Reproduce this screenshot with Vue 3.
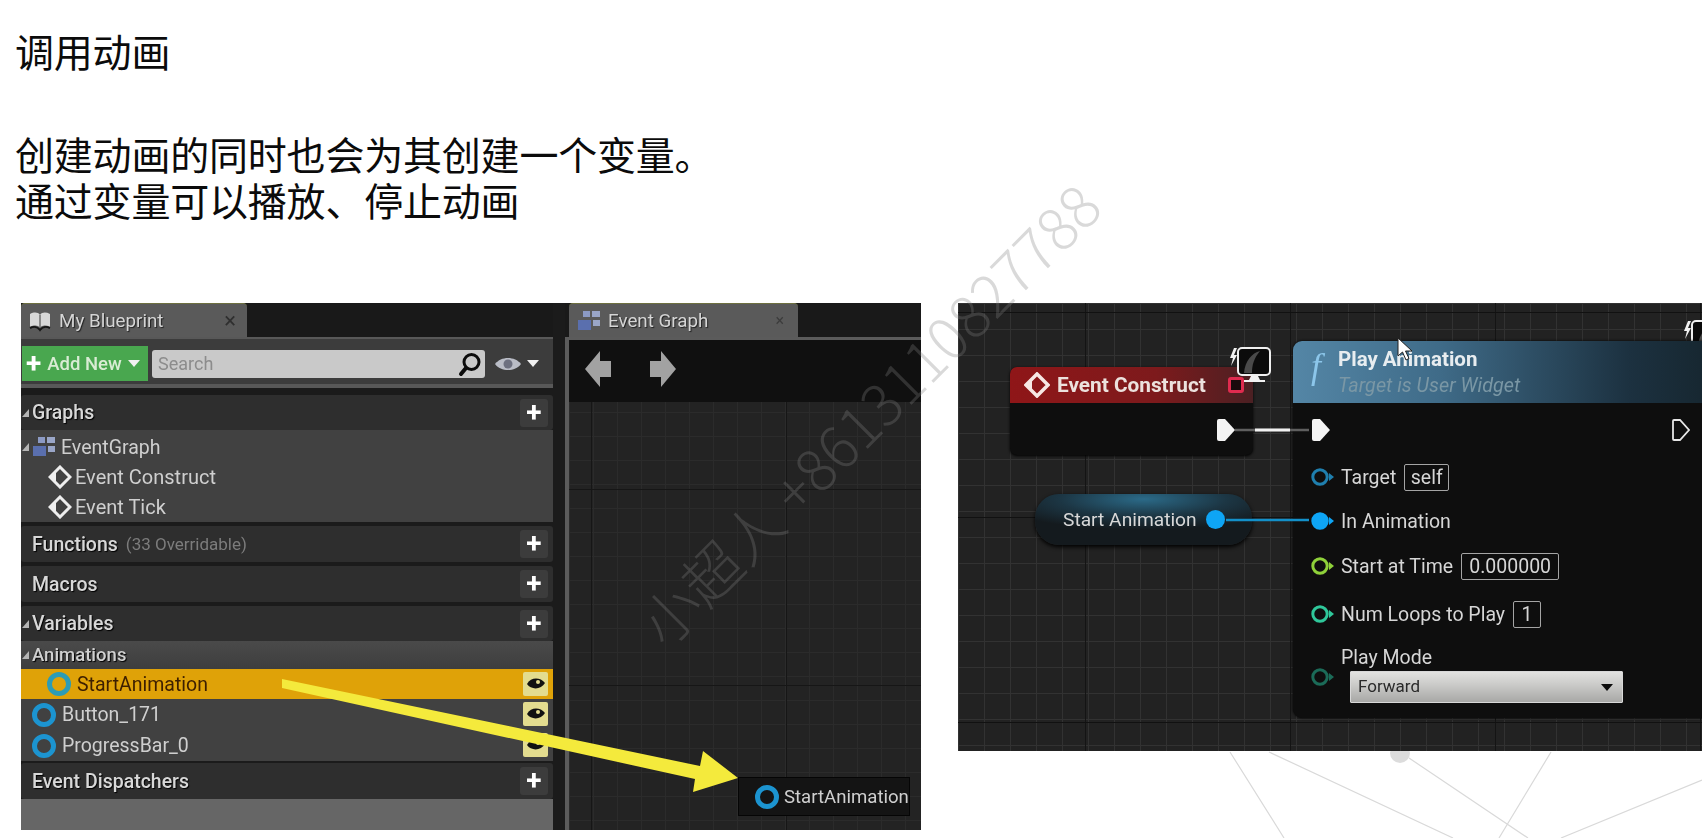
<script setup>
const graphRow = ['Event Construct', 'Event Tick']
const animRows = [
  { name: 'StartAnimation', active: true },
  { name: 'Button_171' },
  { name: 'ProgressBar_0' },
]
const pins = [
  { label: 'Target', color: '#1f7fae', h: 50, box: 'self', boxW: 45 },
  { label: 'In Animation', color: '#0ea5f5', h: 38, solid: true },
  { label: 'Start at Time', color: '#8fd13a', h: 52, box: '0.000000', boxW: 98 },
  { label: 'Num Loops to Play', color: '#2fc79a', h: 44, box: '1', boxW: 28 },
]
</script>

<template>
  <div class="slide">
    <svg class="mesh" width="1702" height="838" viewBox="0 0 1702 838">
      <g stroke="#d9d9d9" stroke-width="1.2" fill="none">
        <path d="M1230 752 1284 838M1269 752 1453 838M1409 758 1528 838M1551 752 1499 838M1702 780 1561 838" />
      </g>
      <circle cx="1400" cy="753" r="10" fill="#dcdcdc" />
    </svg>

    <h1 class="title">调用动画</h1>
    <p class="desc">创建动画的同时也会为其创建一个变量。<br />通过变量可以播放、停止动画</p>

    <div class="shots">
      <div class="editor">
        <div class="left-col">
          <div class="tabbar">
            <div class="tab">
              <svg class="tab-icon" width="24" height="22" viewBox="0 0 24 22">
                <path d="M2 4C6 2 10 2 12 5C14 2 18 2 22 4V17C18 15 14 15 12 18C10 15 6 15 2 17Z" fill="#d8d8d8" />
                <path d="M12 5V18" stroke="#555" stroke-width="1.2" />
                <path d="M2 18C6 16 10 17 12 20C14 17 18 16 22 18" stroke="#161616" stroke-width="2" fill="none" />
              </svg>
              <span class="tab-name">My Blueprint</span>
              <span class="tab-x">×</span>
            </div>
          </div>

          <div class="toolbar">
            <button class="add-btn"><span class="add-plus">+</span>Add New<i class="caret"></i></button>
            <div class="search">
              <span>Search</span>
              <svg width="26" height="26" viewBox="0 0 26 26">
                <circle cx="14.5" cy="11" r="7.5" fill="none" stroke="#0c0c0c" stroke-width="3" />
                <path d="M9 17 4 23" stroke="#0c0c0c" stroke-width="4" stroke-linecap="round" />
              </svg>
            </div>
            <svg class="view-eye" width="28" height="18" viewBox="0 0 28 18">
              <path d="M1 9C7 1 21 1 27 9C21 17 7 17 1 9Z" fill="#b9bcc6" />
              <circle cx="14" cy="9" r="4.5" fill="#6d7080" />
            </svg>
            <i class="caret caret-light"></i>
          </div>

          <div class="head head-first">
            <i class="fold"></i><span>Graphs</span><b class="plus">+</b>
          </div>
          <div class="body">
            <div class="row row-graph">
              <i class="fold"></i>
              <svg width="26" height="22" viewBox="0 0 26 22">
                <rect x="6" y="1" width="7" height="6" fill="#8c9ac4" />
                <rect x="15" y="1" width="8" height="6" fill="#9aa6c8" />
                <rect x="1" y="10" width="13" height="10" fill="#5a6fae" />
                <rect x="16" y="10" width="7" height="6" fill="#9aa6c8" />
              </svg>
              <span>EventGraph</span>
            </div>
            <div v-for="name in graphRow" :key="name" class="row row-event">
              <svg width="24" height="24" viewBox="0 0 24 24">
                <path d="M12 2 22 12 12 22 2 12Z" fill="none" stroke="#eee" stroke-width="3" />
                <path d="M2 12 8 6V18Z" fill="#eee" />
              </svg>
              <span>{{ name }}</span>
            </div>
          </div>

          <div class="head">
            <span>Functions</span><em>(33 Overridable)</em><b class="plus">+</b>
          </div>
          <div class="head">
            <span>Macros</span><b class="plus">+</b>
          </div>
          <div class="head head-vars">
            <i class="fold"></i><span>Variables</span><b class="plus">+</b>
          </div>
          <div class="body">
            <div class="row row-anim"><i class="fold"></i><span>Animations</span></div>
            <div
              v-for="item in animRows"
              :key="item.name"
              class="row row-var"
              :class="{ active: item.active }"
            >
              <i class="ring"></i>
              <span>{{ item.name }}</span>
              <svg class="eye" width="25" height="24" viewBox="0 0 25 24">
                <rect width="25" height="24" rx="2" fill="#e3dc8f" />
                <path d="M4 12C8 5 17 5 22 11C18 18 8 18 4 12Z" fill="#111" />
                <circle cx="15" cy="10" r="2" fill="#e3dc8f" />
              </svg>
            </div>
          </div>
          <div class="head head-last">
            <span>Event Dispatchers</span><b class="plus">+</b>
          </div>
          <div class="filler"></div>
        </div>

        <div class="right-col">
          <div class="tabbar">
            <div class="tab tab-graph">
              <svg width="26" height="22" viewBox="0 0 26 22">
                <rect x="6" y="1" width="7" height="6" fill="#8c9ac4" />
                <rect x="15" y="1" width="8" height="6" fill="#9aa6c8" />
                <rect x="1" y="10" width="13" height="10" fill="#5a6fae" />
                <rect x="16" y="10" width="7" height="6" fill="#9aa6c8" />
              </svg>
              <span class="tab-name">Event Graph</span>
              <span class="tab-x tab-x-dim">×</span>
            </div>
          </div>
          <div class="canvas-left">
            <div class="nav-bar">
              <svg width="26" height="36" viewBox="0 0 26 36"><path d="M0 18 15 0V10H26V26H15V36Z" fill="#a2a2a2" /></svg>
              <svg width="26" height="36" viewBox="0 0 26 36"><path d="M26 18 11 0V10H0V26H11V36Z" fill="#a2a2a2" /></svg>
            </div>
            <div class="drop-chip">
              <i class="ring"></i>
              <span>StartAnimation</span>
            </div>
          </div>
        </div>

        <svg class="drag-arrow" width="900" height="527" viewBox="0 0 900 527">
          <path d="M261 376 679 463 682 448 717 475 672 489 674 476 261 385Z" fill="#f4ea3c" />
        </svg>
      </div>

      <div class="graph">
        <div class="node-event">
          <div class="event-head">
            <svg width="26" height="26" viewBox="0 0 26 26">
              <path d="M13 2 24 13 13 24 2 13Z" fill="none" stroke="#f7e7e4" stroke-width="3.5" />
              <path d="M2 13 8 7V19Z" fill="#f7e7e4" />
            </svg>
            <span>Event Construct</span>
            <i class="delegate"></i>
          </div>
          <div class="event-body">
            <svg class="exec" width="18" height="22" viewBox="0 0 18 22"><path d="M2 0H8L18 11 8 22H2Q0 22 0 20V2Q0 0 2 0Z" fill="#f4f4f4" /></svg>
          </div>
        </div>

        <svg class="client client-a" width="42" height="38" viewBox="0 0 42 38">
          <path d="M4 1 0 11H3L1 19 7 8H4L7 1Z" fill="#f2f2f2" />
          <rect x="8" y="1" width="32" height="27" rx="4" fill="#0b0b0b" stroke="#efefef" stroke-width="2" />
          <path d="M14 26C15 14 22 6 30 4 24 11 22 18 22 26Z" fill="#4a4a4a" />
          <path d="M21 29H28L30 33H35V35H14V33H19Z" fill="#f2f2f2" />
        </svg>
        <svg class="client client-b" width="42" height="38" viewBox="0 0 42 38">
          <path d="M4 1 0 11H3L1 19 7 8H4L7 1Z" fill="#f2f2f2" />
          <rect x="8" y="1" width="32" height="27" rx="4" fill="#0b0b0b" stroke="#efefef" stroke-width="2" />
          <path d="M14 26C15 14 22 6 30 4 24 11 22 18 22 26Z" fill="#4a4a4a" />
          <path d="M21 29H28L30 33H35V35H14V33H19Z" fill="#f2f2f2" />
        </svg>

        <div class="node-var">
          <span>Start Animation</span>
          <i class="var-pin"></i>
        </div>

        <div class="node-call">
          <div class="call-head">
            <span class="func">f</span>
            <div>
              <div class="call-title">Play Animation</div>
              <div class="call-sub">Target is User Widget</div>
            </div>
          </div>
          <div class="call-body">
            <div class="exec-row">
              <svg width="18" height="22" viewBox="0 0 18 22"><path d="M2 0H8L18 11 8 22H2Q0 22 0 20V2Q0 0 2 0Z" fill="#f4f4f4" /></svg>
              <svg width="18" height="22" viewBox="0 0 18 22"><path d="M2 1H8L17 11 8 21H2Q1 21 1 20V2Q1 1 2 1Z" fill="none" stroke="#e6e6e6" stroke-width="1.8" /></svg>
            </div>
            <div v-for="pin in pins" :key="pin.label" class="pin-row" :style="{ height: pin.h + 'px' }">
              <svg width="24" height="20" viewBox="0 0 24 20">
                <circle cx="9" cy="10" r="7.2" :fill="pin.solid ? pin.color : '#0e0e0e'" :stroke="pin.color" stroke-width="3" />
                <path d="M18 6 23 10 18 14Z" :fill="pin.color" />
              </svg>
              <span>{{ pin.label }}</span>
              <span v-if="pin.box" class="val-box" :style="{ width: pin.boxW + 'px' }">{{ pin.box }}</span>
            </div>
            <div class="mode-row">
              <svg width="24" height="20" viewBox="0 0 24 20">
                <circle cx="9" cy="10" r="7.2" fill="#0e0e0e" stroke="#1b6b58" stroke-width="3" />
                <path d="M18 6 23 10 18 14Z" fill="#1b6b58" />
              </svg>
              <div class="mode-col">
                <span>Play Mode</span>
                <div class="combo">Forward<i></i></div>
              </div>
            </div>
          </div>
        </div>

        <svg class="wires" width="744" height="448" viewBox="0 0 744 448">
          <path d="M277 127H351" stroke="#5f5f5f" stroke-width="2.5" />
          <path d="M297 127H332" stroke="#f2f2f2" stroke-width="3" />
          <path d="M268 217H351" stroke="#1390c9" stroke-width="2.5" />
        </svg>

        <svg class="cursor" width="16" height="24" viewBox="0 0 16 24">
          <path d="M1 1V19L5.5 15 9 23 12 21.5 8.5 14H15Z" fill="#fff" stroke="#222" stroke-width="1" />
        </svg>
      </div>
    </div>

    <div class="watermark">小超人 +8613110827788</div>
  </div>
</template>

<style scoped>
.slide {
  position: relative;
  width: 1702px;
  height: 838px;
  overflow: hidden;
  background: #fff;
  padding-top: 27px;
  box-sizing: border-box;
  font-family: Roboto, "Liberation Sans", sans-serif;
}
.mesh { position: absolute; left: 0; top: 0; }
.title, .desc {
  position: relative;
  margin: 0 0 0 15px;
  font: 400 39px/46px "Noto Sans CJK SC", sans-serif;
  color: #0b0b0b;
  letter-spacing: -0.2px;
}
.title { margin-bottom: 57px; }
.desc { margin-bottom: 81px; }

.shots { position: relative; display: flex; align-items: flex-start; padding-left: 21px; gap: 37px; }

.editor {
  position: relative;
  display: flex;
  width: 900px;
  height: 527px;
  background: #1b1b1b;
  gap: 12px;
  flex-shrink: 0;
  filter: blur(0.4px);
}
.left-col { width: 532px; display: flex; flex-direction: column; color: #cfcfcf; font-size: 19.5px; }
.right-col { flex: 1; display: flex; flex-direction: column; }
.tabbar { height: 34px; background: #191919; display: flex; }
.tab {
  width: 226px;
  display: flex;
  align-items: center;
  gap: 7px;
  padding-left: 7px;
  box-sizing: border-box;
  background: #5a5a5a;
  border-top: 1px solid #6e7040;
  border-radius: 4px 4px 0 0;
  position: relative;
}
.tab-name { color: #d5d5d5; font-size: 18.8px; text-shadow: 1px 1px 1px #222; }
.tab-x { position: absolute; right: 11px; color: #2f2f2f; font-size: 22px; }
.tab-x-dim { color: #3c3c3c; right: 14px; font-size: 16px; }
.tab-graph { width: 229px; margin-left: 4px; padding-left: 8px; gap: 5px; }

.toolbar {
  height: 51px;
  background: #3c3c3c;
  border-top: 2px solid #585858;
  border-bottom: 4px solid #585858;
  box-sizing: border-box;
  display: flex;
  align-items: center;
  padding: 4px 0 0 1px;
}
.add-btn {
  width: 126px;
  height: 35px;
  border: 0;
  padding: 0 0 0 4px;
  background: #49a74f;
  color: #d9ecd4;
  font: 500 18.5px Roboto, sans-serif;
  display: flex;
  align-items: center;
  white-space: nowrap;
}
.add-plus { color: #fff; font-size: 28px; font-weight: 700; line-height: 28px; margin-right: 6px; }
.caret {
  display: inline-block;
  width: 0;
  height: 0;
  margin-left: 6px;
  border: 6px solid transparent;
  border-top: 7px solid #f1f1f1;
  border-bottom: 0;
}
.caret-light { margin-left: 5px; }
.search {
  width: 333px;
  height: 28px;
  margin-left: 4px;
  padding: 0 2px 0 6px;
  box-sizing: border-box;
  background: #c9c9c9;
  border-radius: 3px;
  color: #8c8c8c;
  font-size: 18px;
  display: flex;
  align-items: center;
  justify-content: space-between;
}
.view-eye { margin-left: 9px; }

.head {
  position: relative;
  height: 36px;
  margin-top: 4px;
  display: flex;
  align-items: center;
  padding-left: 11px;
  background: #2e2e2e;
  border-radius: 3px;
  color: #d8d8d8;
  font-weight: 500;
  font-size: 19.5px;
  text-shadow: 1px 1px 1px #000;
}
.head em { font-style: normal; font-weight: 400; font-size: 17px; color: #7c7c7c; margin-left: 8px; text-shadow: none; }
.head-first { height: 35px; margin-top: 7px; }
.head-vars { height: 35px; }
.head-last { margin-top: 2px; }
.plus {
  position: absolute;
  right: 5px;
  top: 4px;
  width: 28px;
  height: 28px;
  background: #3c3c3c;
  border-radius: 3px;
  color: #fff;
  font-size: 28px;
  line-height: 27px;
  text-align: center;
  text-shadow: none;
}
.fold {
  position: absolute;
  left: 1px;
  width: 0;
  height: 0;
  border-left: 7px solid transparent;
  border-bottom: 8px solid #b5b5b5;
}
.body { background: #414141; }
.row { position: relative; display: flex; align-items: center; height: 30px; }
.row-graph { padding-left: 11px; gap: 3px; }
.row-event { padding-left: 27px; gap: 3px; font-size: 20px; }
.row-graph:first-child { margin-top: 2px; }
.row-anim { height: 28px; padding-left: 11px; color: #d0d0d0; font-size: 18.5px; font-weight: 500; text-shadow: 1px 1px 1px #000; background: linear-gradient(#4a4a4a, #3e3e3e); }
.row-var { height: 31px; padding-left: 11px; gap: 6px; }
.row-var.active { height: 30px; padding-left: 26px; background: #dfa208; color: #3d1f00; }
.ring {
  display: block;
  width: 24px;
  height: 24px;
  box-sizing: border-box;
  border: 5px solid #1c94d0;
  border-radius: 50%;
}
.row-var.active .ring { border-color: #2d9cb5; }
.eye { position: absolute; right: 5px; top: 3px; }
.filler { flex: 1; background: #666; }

.canvas-left {
  flex: 1;
  position: relative;
  border-left: 4px solid #5b5b5b;
  border-top: 3px solid #5b5b5b;
  background-color: #232323;
  background-image:
    linear-gradient(#161616 1px, transparent 1px),
    linear-gradient(90deg, #161616 1px, transparent 1px),
    linear-gradient(#2b2b2b 1px, transparent 1px),
    linear-gradient(90deg, #2b2b2b 1px, transparent 1px);
  background-size: 196px 196px, 195px 195px, 24px 24px, 24px 24px;
  background-position: 0 149px, 22px 0, 0 0, 0 0;
}
.nav-bar {
  height: 62px;
  background: #101010;
  display: flex;
  gap: 39px;
  padding: 11px 0 0 16px;
  box-sizing: border-box;
}
.drop-chip {
  position: absolute;
  left: 169px;
  bottom: 14px;
  width: 172px;
  height: 39px;
  box-sizing: border-box;
  background: #141414;
  border: 1px solid #050505;
  display: flex;
  align-items: center;
  padding-left: 16px;
  gap: 5px;
  color: #cfcfcf;
  font-size: 18.6px;
}
.drag-arrow { position: absolute; left: 0; top: 0; }

.graph {
  position: relative;
  flex: 1;
  height: 448px;
  overflow: hidden;
  filter: blur(0.4px);
  background-color: #222;
  background-image:
    linear-gradient(#111 1.5px, transparent 1.5px),
    linear-gradient(90deg, #141414 1.5px, transparent 1.5px),
    linear-gradient(#323232 1px, transparent 1px),
    linear-gradient(90deg, #323232 1px, transparent 1px);
  background-size: 205px 205px, 205px 205px, 26px 26px, 26px 26px;
  background-position: 0 9px, 127px 0, 0 0, 0 0;
}
.wires { position: absolute; left: 0; top: 0; }

.node-event {
  position: absolute;
  left: 52px;
  top: 64px;
  width: 243px;
  height: 88px;
  border-radius: 7px;
  overflow: hidden;
  background: #0e0e0e;
  box-shadow: 0 1px 3px #000;
}
.event-head {
  height: 36px;
  display: flex;
  align-items: center;
  gap: 7px;
  padding-left: 14px;
  background: linear-gradient(90deg, #8f1618 0%, #7d1a1c 60%, #4b2023 100%);
  color: #ece1dd;
  font-weight: 700;
  font-size: 20.8px;
  position: relative;
}
.delegate {
  position: absolute;
  right: 9px;
  top: 10px;
  width: 16px;
  height: 16px;
  box-sizing: border-box;
  border: 3px solid #e02b4f;
  border-radius: 3px;
  background: #1a0a0c;
}
.event-body { position: relative; }
.exec { position: absolute; left: 207px; top: 16px; }

.client { position: absolute; }
.client-a { left: 272px; top: 44px; }
.client-b { left: 726px; top: 17px; }

.node-var {
  position: absolute;
  left: 77px;
  top: 191px;
  width: 217px;
  height: 51px;
  box-sizing: border-box;
  border-radius: 24px;
  background: radial-gradient(ellipse 70% 60% at 50% 10%, #2b6a88 0%, #1c3644 55%, #141a1e 100%);
  box-shadow: 0 2px 4px #000;
  color: #d8d8d8;
  font-size: 19.2px;
  font-weight: 400;
  display: flex;
  align-items: center;
  padding-left: 28px;
  gap: 9px;
}
.var-pin { width: 19px; height: 19px; border-radius: 50%; background: #0ea5f5; }

.node-call {
  position: absolute;
  left: 335px;
  top: 38px;
  width: 420px;
  height: 377px;
  border-radius: 9px;
  overflow: hidden;
  background: #0e0e0e;
  box-shadow: 0 0 3px #000;
}
.call-head {
  height: 62px;
  box-sizing: border-box;
  display: flex;
  gap: 9px;
  padding: 6px 0 0 18px;
  background: linear-gradient(90deg, #5486a6 0%, #3f6b88 35%, #1c3140 80%, #16262f 100%);
}
.func { width: 18px; color: #8cc6ea; font: italic 36px/38px "Liberation Serif", serif; }
.call-title { color: #e8edf0; font-weight: 700; font-size: 20.5px; line-height: 24px; }
.call-sub { color: #7a97a5; font-style: italic; font-size: 19.8px; line-height: 30px; }
.call-body { padding: 5px 0 0 18px; color: #d6d6d6; font-size: 19.5px; }
.exec-row {
  height: 44px;
  width: 378px;
  display: flex;
  align-items: center;
  justify-content: space-between;
  margin-left: 1px;
}
.pin-row { display: flex; align-items: center; gap: 6px; }
.val-box {
  height: 27px;
  margin-left: 2px;
  box-sizing: border-box;
  border: 1px solid #a5a5a5;
  border-radius: 2px;
  text-align: center;
  line-height: 25px;
}
.mode-row { display: flex; align-items: flex-start; gap: 6px; }
.mode-row > svg { margin-top: 31px; }
.mode-col { display: flex; flex-direction: column; line-height: 44px; }
.mode-col > span { height: 35px; line-height: 44px; }
.combo {
  position: relative;
  width: 273px;
  height: 32px;
  margin-left: 9px;
  padding-left: 7px;
  box-sizing: border-box;
  background: linear-gradient(#e2e2e0, #c9c9c7 45%, #a8a8a6);
  border: 1px solid #d8d8d8;
  border-radius: 1px;
  color: #2a2a2a;
  font-size: 17px;
  line-height: 29px;
}
.combo i {
  position: absolute;
  right: 9px;
  top: 12px;
  border: 6px solid transparent;
  border-top: 7px solid #0c0c0c;
  border-bottom: 0;
}
.cursor { position: absolute; left: 439px; top: 34px; }

.watermark {
  position: absolute;
  left: 868px;
  top: 413px;
  transform: translate(-50%, -50%) rotate(-45deg);
  white-space: nowrap;
  font: 300 58px/64px "Noto Sans CJK SC", sans-serif;
  color: rgba(130, 130, 130, 0.3);
  pointer-events: none;
}
</style>
